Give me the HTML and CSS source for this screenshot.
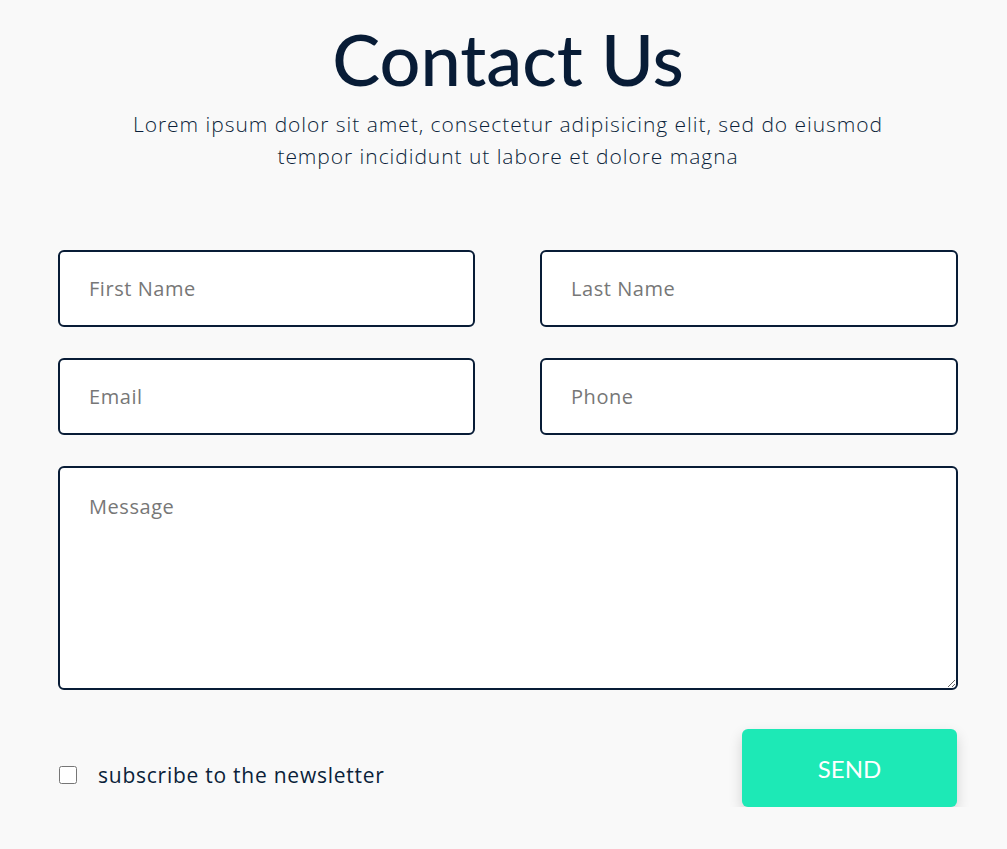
FILE: index.html
```html
<!DOCTYPE html>
<html lang="en">
<head>
<meta charset="utf-8">
<title>Contact Us</title>
<link rel="stylesheet" href="styles.css">
</head>
<body>
<main class="contact">
  <h1 class="title">Contact Us</h1>
  <p class="lead">Lorem ipsum dolor sit amet, consectetur adipisicing elit, sed do eiusmod<br>tempor incididunt ut labore et dolore magna</p>
  <form class="form">
    <div class="grid">
      <input class="field" type="text" placeholder="First Name">
      <input class="field" type="text" placeholder="Last Name">
      <input class="field" type="email" placeholder="Email">
      <input class="field" type="tel" placeholder="Phone">
      <textarea class="field area" placeholder="Message"></textarea>
    </div>
    <div class="footer">
      <label class="check"><input type="checkbox" class="box"><span>subscribe to the newsletter</span></label>
      <button type="button" class="send">SEND</button>
    </div>
  </form>
</main>
</body>
</html>
```
FILE: styles.css
```css
html, body {
  margin: 0;
  padding: 0;
  background: #f9f9f9;
}
body {
  font-family: "Open Sans", "Lato", sans-serif;
  color: #0b1f3a;
}
.contact {
  width: 900px;
  margin: 0 0 0 58px;
  padding-top: 16px;
}
.title {
  margin: 0;
  text-align: center;
  font-family: "Lato", sans-serif;
  font-size: 72px;
  font-weight: 500;
  line-height: 84px;
  color: #081c36;
}
.lead {
  margin: 8px 0 0;
  text-align: center;
  font-size: 21px;
  font-weight: 300;
  line-height: 32px;
  letter-spacing: 0.95px;
}
.form {
  margin-top: 78px;
}
.grid {
  display: grid;
  grid-template-columns: 417px 1fr;
  column-gap: 65px;
  row-gap: 31px;
}
.field {
  box-sizing: border-box;
  height: 77px;
  border: 2px solid #081c36;
  border-radius: 6px;
  background: #fff;
  padding: 0 29px;
  font-family: inherit;
  font-size: 20px;
  letter-spacing: 0.55px;
  color: #0b1f3a;
  outline: none;
}
.field::placeholder {
  color: #777;
}
.area {
  grid-column: 1 / -1;
  height: 224px;
  padding-top: 25px;
  resize: vertical;
}
.footer {
  display: flex;
  justify-content: space-between;
  align-items: center;
  margin-top: 39px;
}
.check {
  display: flex;
  align-items: center;
  gap: 21px;
  font-size: 21px;
  letter-spacing: 0.75px;
  padding-top: 14px;
}
.box {
  margin: 0 0 0 1px;
  width: 18px;
  height: 18px;
}
.send {
  width: 215px;
  height: 78px;
  margin-right: 1px;
  border: none;
  border-radius: 6px;
  background: #1de9b6;
  color: #fff;
  font-family: "Lato", sans-serif;
  font-size: 24px;
  box-shadow: 0 6px 14px rgba(0,0,0,0.16);
}
```
